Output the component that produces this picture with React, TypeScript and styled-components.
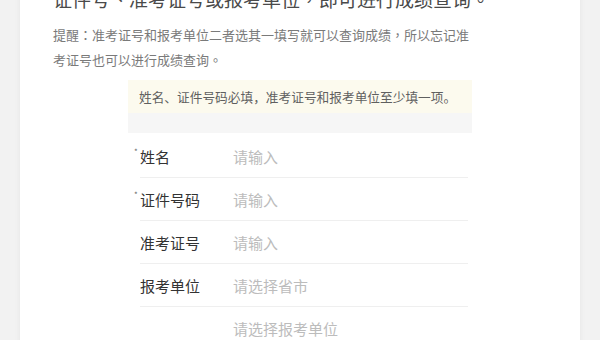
import React from "react";
import styled, { createGlobalStyle } from "styled-components";

const Global = createGlobalStyle`
  html, body { margin: 0; padding: 0; background: #f2f2f2; overflow: hidden; }
  body { font-family: "Noto Sans CJK SC", "Noto Sans", sans-serif; }
`;

const Page = styled.div`
  width: 600px;
  height: 340px;
  overflow: hidden;
  padding: 0 20px;
  box-sizing: border-box;
`;

const Card = styled.div`
  background: #ffffff;
  margin-top: -16px;
  padding: 0 33px 40px;
  box-shadow: 0 0 6px rgba(0, 0, 0, 0.06);
  min-height: 400px;
`;

const Heading = styled.div`
  font-family: "Noto Sans CJK TC", "Noto Sans CJK SC", sans-serif;
  font-size: 19px;
  line-height: 30px;
  color: #4a4a4a;
  white-space: nowrap;
`;

const Hint = styled.p`
  font-family: "Noto Sans CJK TC", "Noto Sans CJK SC", sans-serif;
  margin: 8px 0 0;
  font-size: 13px;
  line-height: 25px;
  color: #7a7a7a;
  width: 422px;
`;

const FormBox = styled.div`
  width: 344px;
  margin: 8px 0 0 75px;
`;

const Notice = styled.div`
  background: #fcfaee;
  height: 33px;
  padding-left: 11px;
  display: flex;
  align-items: center;
  font-size: 12.7px;
  color: #5f5f5f;
`;

const Spacer = styled.div`
  background: #f6f6f6;
  height: 20px;
  margin-bottom: 2px;
`;

const Row = styled.div<{ $last?: boolean }>`
  display: flex;
  align-items: center;
  height: 42px;
  margin: 0 4px 0 12px;
  border-bottom: ${(p) => (p.$last ? "none" : "1px solid #efefef")};
`;

const Label = styled.div<{ $required?: boolean }>`
  position: relative;
  width: 93px;
  flex: none;
  font-size: 15px;
  color: #333;
  &::before {
    content: ${(p) => (p.$required ? '"*"' : "none")};
    position: absolute;
    left: -6px;
    top: 0px;
    font-size: 8px;
    color: #666;
  }
`;

const Placeholder = styled.div`
  font-size: 15px;
  color: #bcbcbc;
`;

const rows: { label: string; placeholder: string; required?: boolean }[] = [
  { label: "姓名", placeholder: "请输入", required: true },
  { label: "证件号码", placeholder: "请输入", required: true },
  { label: "准考证号", placeholder: "请输入" },
  { label: "报考单位", placeholder: "请选择省市" },
  { label: "", placeholder: "请选择报考单位" },
];

export default function App() {
  return (
    <>
      <Global />
      <Page>
        <Card>
          <Heading lang="zh-TW">证件号、准考证号或报考单位，即可进行成绩查询。</Heading>
          <Hint lang="zh-TW">
            提醒：准考证号和报考单位二者选其一填写就可以查询成绩，所以忘记准考证号也可以进行成绩查询。
          </Hint>
          <FormBox lang="zh-CN">
            <Notice>姓名、证件号码必填，准考证号和报考单位至少填一项。</Notice>
            <Spacer />
            {rows.map((r, i) => (
              <Row key={i} $last={i === rows.length - 1}>
                <Label $required={r.required}>{r.label}</Label>
                <Placeholder>{r.placeholder}</Placeholder>
              </Row>
            ))}
          </FormBox>
        </Card>
      </Page>
    </>
  );
}
